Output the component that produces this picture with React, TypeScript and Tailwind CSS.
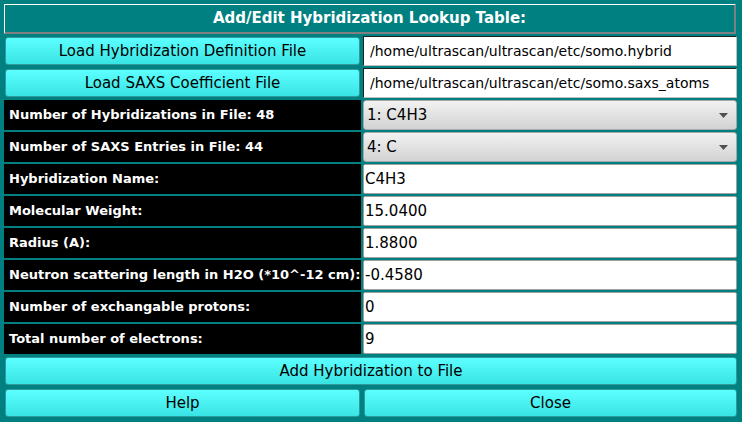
import React from 'react'

const FIELDS = [
  { label: 'Hybridization Name:', value: 'C4H3' },
  { label: 'Molecular Weight:', value: '15.0400' },
  { label: 'Radius (A):', value: '1.8800' },
  { label: 'Neutron scattering length in H2O (*10^-12 cm):', value: '-0.4580' },
  { label: 'Number of exchangable protons:', value: '0' },
  { label: 'Total number of electrons:', value: '9' },
]

function CyanButton({ children, className = '' }: { children: React.ReactNode; className?: string }) {
  return (
    <div className={'p-px ' + className}>
      <button className="w-full h-full rounded-[3px] border border-[#2f9a9a] bg-gradient-to-b from-[#5cffff] to-[#38e4e4] text-[15px] text-black leading-none">
        {children}
      </button>
    </div>
  )
}

function Label({ children }: { children: React.ReactNode }) {
  return (
    <div className="bg-black text-white font-bold text-[13px] flex items-center pl-[5px] whitespace-nowrap overflow-hidden">
      {children}
    </div>
  )
}

function Combo({ value }: { value: string }) {
  return (
    <div className="rounded-[3px] border border-[#a8a8a8] bg-gradient-to-b from-[#f2f2f2] to-[#d2d2d2] flex items-center justify-between pl-[3px] pr-[8px] text-[15px] text-black mr-px">
      <span>{value}</span>
      <svg width="9" height="5" viewBox="0 0 9 5">
        <path d="M0 0 L9 0 L4.5 5 Z" fill="#505050" />
      </svg>
    </div>
  )
}

export default function App() {
  return (
    <div
      className="w-[742px] h-[422px] bg-[#008080] p-[4px] grid grid-cols-[357px_375px] auto-rows-[30px] gap-[2px] overflow-hidden"
      style={{ fontFamily: '"DejaVu Sans", Verdana, sans-serif' }}
    >
      <div className="col-span-2 mr-[2px] border-t border-l border-white border-b-2 border-r-2 border-b-[#808080] border-r-[#808080] flex items-center justify-center text-white font-bold text-[15px]">
        Add/Edit Hybridization Lookup Table:
      </div>

      <CyanButton>Load Hybridization Definition File</CyanButton>
      <div className="bg-white border border-t-[#202020] border-l-[#202020] border-b-[#c0c0c0] border-r-[#c0c0c0] flex items-center pl-[6px] text-[14px] text-black whitespace-nowrap overflow-hidden mr-px">
        /home/ultrascan/ultrascan/etc/somo.hybrid
      </div>

      <CyanButton>Load SAXS Coefficient File</CyanButton>
      <div className="bg-white border border-t-[#202020] border-l-[#202020] border-b-[#c0c0c0] border-r-[#c0c0c0] flex items-center pl-[6px] text-[14px] text-black whitespace-nowrap overflow-hidden mr-px">
        /home/ultrascan/ultrascan/etc/somo.saxs_atoms
      </div>

      <Label>Number of Hybridizations in File: 48</Label>
      <Combo value="1: C4H3" />

      <Label>Number of SAXS Entries in File: 44</Label>
      <Combo value="4: C" />

      {FIELDS.map(f => (
        <React.Fragment key={f.label}>
          <Label>{f.label}</Label>
          <div className="bg-white border border-[#a0a0a0] rounded-[2px] flex items-center pl-px text-[15px] text-black mr-px">
            {f.value}
          </div>
        </React.Fragment>
      ))}

      <CyanButton className="col-span-2">Add Hybridization to File</CyanButton>
      <CyanButton>Help</CyanButton>
      <CyanButton>Close</CyanButton>
    </div>
  )
}
